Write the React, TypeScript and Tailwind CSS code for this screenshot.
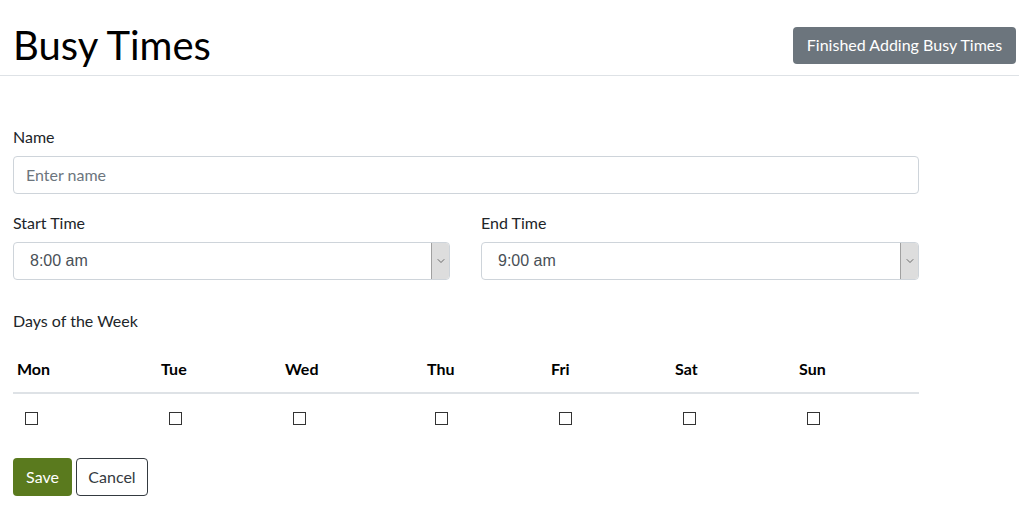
import { ChevronDown } from "lucide-react";

const days = [
  { name: "Mon", w: "w-[144px]" },
  { name: "Tue", w: "w-[124px]" },
  { name: "Wed", w: "w-[142px]" },
  { name: "Thu", w: "w-[124px]" },
  { name: "Fri", w: "w-[124px]" },
  { name: "Sat", w: "w-[124px]" },
  { name: "Sun", w: "w-[124px]" },
];

function TimeSelect({ value }: { value: string }) {
  return (
    <div className="flex h-[38px] w-full items-stretch rounded-[4px] border border-[#ced4da] bg-white">
      <span className="flex flex-1 items-center pl-4 font-['Liberation_Sans',Arial,sans-serif] text-[16px] text-[#495057]">
        {value}
      </span>
      <span className="flex w-[18px] items-center justify-center rounded-r-[3px] border-l border-[#a0a0a0] bg-[#dddddd] text-[#444]">
        <ChevronDown className="h-3 w-3" strokeWidth={1.5} />
      </span>
    </div>
  );
}

export default function App() {
  return (
    <div className="min-h-screen bg-white font-['Lato','Open_Sans',sans-serif] text-[16px] text-[#212529]">
      <div className="flex items-center justify-between border-b border-[#dee2e6] pb-[11px] pl-[13px] pr-[3px] pt-[26px]">
        <h1 className="text-[40px] leading-[38px] font-normal text-black">Busy Times</h1>
        <button className="flex h-[37px] w-[223px] items-center justify-center rounded-[4px] bg-[#6c757d] text-[16px] text-white">
          Finished Adding Busy Times
        </button>
      </div>

      <div className="w-[906px] pl-[13px] box-content pt-[49px]">
        <label className="block leading-6">Name</label>
        <div className="mt-[7px] flex h-[38px] items-center rounded-[4px] border border-[#ced4da] px-3 text-[#6c757d]">
          Enter name
        </div>

        <div className="mt-[17px] flex gap-[31px]">
          <div className="w-[437px]">
            <label className="block leading-6">Start Time</label>
            <div className="mt-[7px]">
              <TimeSelect value="8:00 am" />
            </div>
          </div>
          <div className="flex-1">
            <label className="block leading-6">End Time</label>
            <div className="mt-[7px]">
              <TimeSelect value="9:00 am" />
            </div>
          </div>
        </div>

        <label className="mt-[29px] block leading-6">Days of the Week</label>

        <div className="mt-[24px]">
          <div className="flex border-b-2 border-[#dee2e6] pb-[11px]">
            {days.map((d) => (
              <div key={d.name} className={`${d.w} pl-1 font-bold text-black`}>
                {d.name}
              </div>
            ))}
          </div>
          <div className="flex h-[48px] items-center">
            {days.map((d) => (
              <div key={d.name} className={`${d.w} pl-3`}>
                <span className="block h-[13px] w-[13px] border-[1.5px] border-[#333]" />
              </div>
            ))}
          </div>
        </div>

        <div className="mt-[16px] flex gap-[4px]">
          <button className="flex h-[38px] w-[59px] items-center justify-center rounded-[4px] bg-[#5a7a1e] text-white">
            Save
          </button>
          <button className="flex h-[38px] w-[72px] items-center justify-center rounded-[4px] border border-[#343a40] bg-white text-[#343a40]">
            Cancel
          </button>
        </div>
      </div>
    </div>
  );
}
